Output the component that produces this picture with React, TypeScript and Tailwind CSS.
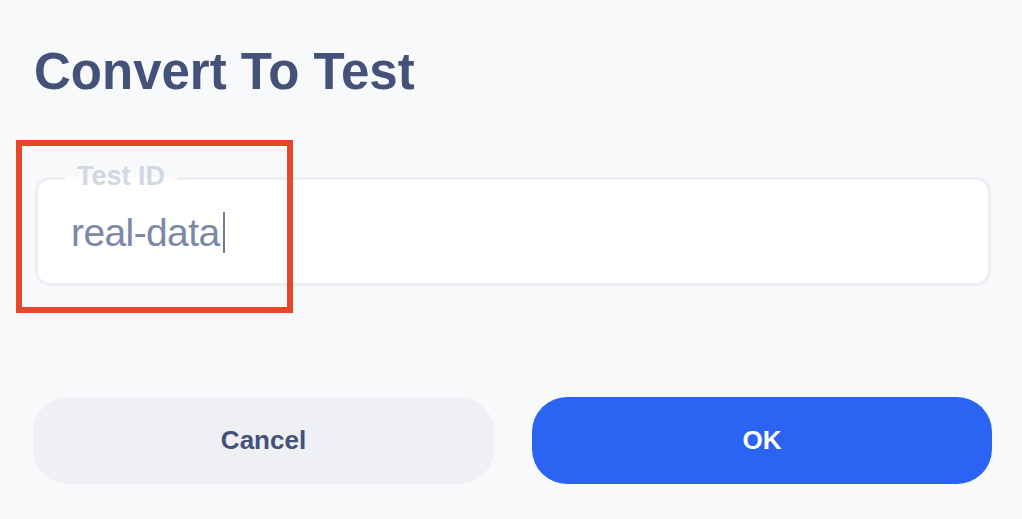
export default function App() {
  return (
    <div className="relative w-[1022px] h-[519px] overflow-hidden bg-[#f8f9fb] pl-[33px] pr-[30px] pt-[46px] font-['Liberation_Sans',Arial,sans-serif]">
      <h1 className="pl-[1px] text-[51px] leading-[51px] font-bold text-[#44527a]">
        Convert To Test
      </h1>
      <fieldset className="mt-[66px] ml-[2px] mr-[1px] rounded-[15px] border-[3px] border-[#eceef3] bg-white p-0 min-w-0">
        <legend className="ml-[27px] px-[12px] pb-[5px] text-[27px] leading-[26px] font-bold text-[#d2d7e4]">
          Test ID
        </legend>
        <div className="flex items-center pl-[33px] pt-[18px] pb-[30px]">
          <span className="text-[39px] leading-[41px] text-[#7c88a8] tracking-[-0.6px]">real-data</span>
          <span className="ml-[3px] h-[41px] w-[2px] bg-[#6f7b96]" />
        </div>
      </fieldset>
      <div className="mt-[111px] grid grid-cols-[461px_460px] gap-[38px]">
        <button className="h-[87px] rounded-[35px] bg-[#eff0f4] text-[26px] font-bold text-[#44527a]">
          Cancel
        </button>
        <button className="h-[87px] rounded-[35px] bg-[#2b64f3] text-[26px] font-bold text-white">
          OK
        </button>
      </div>
      <div className="absolute left-[16px] top-[140px] h-[173px] w-[277px] border-[6px] border-[#e5472b]" />
    </div>
  );
}
